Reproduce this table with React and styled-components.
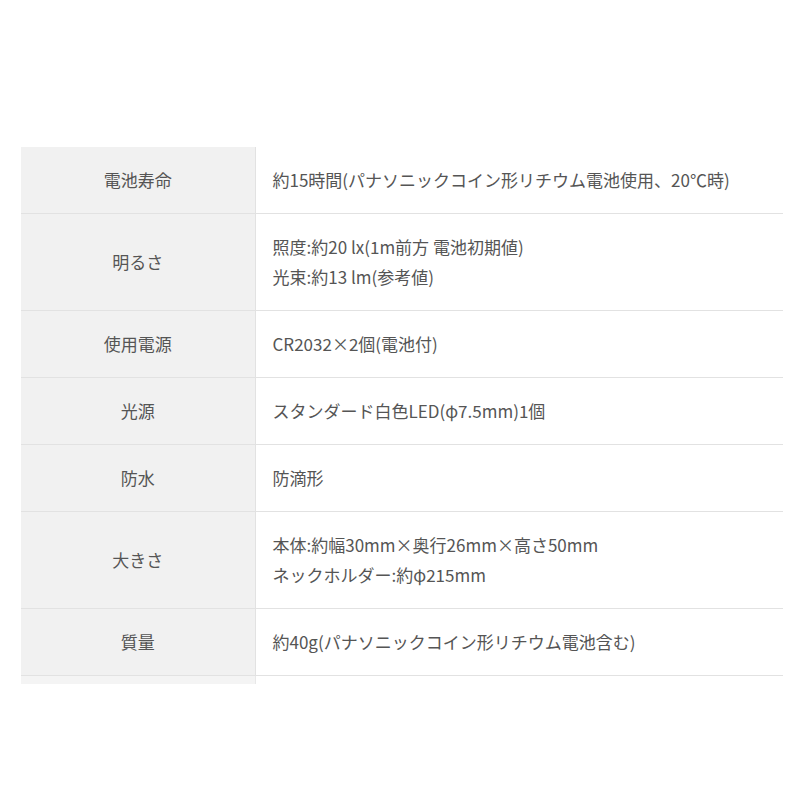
import React from "react";
import styled, { createGlobalStyle } from "styled-components";

const GlobalStyle = createGlobalStyle`
  html, body {
    margin: 0;
    padding: 0;
    background: #ffffff;
  }
  body {
    font-family: "Noto Sans CJK JP", "Noto Sans", sans-serif;
    color: #555555;
  }
`;

const Page = styled.div`
  width: 800px;
  height: 800px;
  padding: 147px 17px 0 21px;
  box-sizing: border-box;
`;

const SpecTable = styled.table`
  width: 100%;
  border-collapse: collapse;
  font-size: 17px;
  line-height: 30px;
`;

const Row = styled.tr`
  border-bottom: 1px solid #e2e2e2;
`;

const Label = styled.th`
  width: 234px;
  background: #f1f1f1;
  border-right: 1px solid #e2e2e2;
  font-weight: normal;
  text-align: center;
  padding: 18px 10px;
  box-sizing: border-box;
`;

const Value = styled.td`
  text-align: left;
  padding: 18px 16px 18px 17px;
`;

const Tail = styled.tr``;

const TailCell = styled.td`
  height: 8px;
  padding: 0;
  background: ${(p) => (p.$shade ? "#f4f4f4" : "transparent")};
  border-right: ${(p) => (p.$shade ? "1px solid #e8e8e8" : "none")};
`;

const specs = [
  ["電池寿命", ["約15時間(パナソニックコイン形リチウム電池使用、20℃時)"]],
  ["明るさ", ["照度:約20 lx(1m前方 電池初期値)", "光束:約13 lm(参考値)"]],
  ["使用電源", ["CR2032×2個(電池付)"]],
  ["光源", ["スタンダード白色LED(φ7.5mm)1個"]],
  ["防水", ["防滴形"]],
  ["大きさ", ["本体:約幅30mm×奥行26mm×高さ50mm", "ネックホルダー:約φ215mm"]],
  ["質量", ["約40g(パナソニックコイン形リチウム電池含む)"]],
];

export default function App() {
  return (
    <>
      <GlobalStyle />
      <Page>
        <SpecTable>
          <tbody>
            {specs.map(([label, lines]) => (
              <Row key={label}>
                <Label>{label}</Label>
                <Value>
                  {lines.map((line, i) => (
                    <div key={i}>{line}</div>
                  ))}
                </Value>
              </Row>
            ))}
            <Tail>
              <TailCell $shade />
              <TailCell />
            </Tail>
          </tbody>
        </SpecTable>
      </Page>
    </>
  );
}
